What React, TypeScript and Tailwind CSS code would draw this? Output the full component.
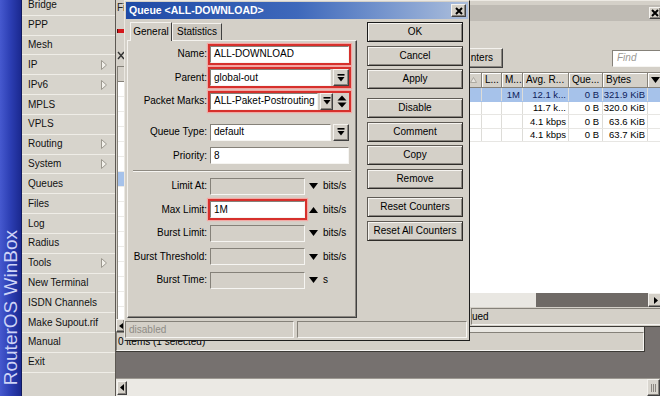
import React from 'react';

const MENU: [string, boolean][] = [
  ['Bridge', false],
  ['PPP', false],
  ['Mesh', false],
  ['IP', true],
  ['IPv6', true],
  ['MPLS', false],
  ['VPLS', false],
  ['Routing', true],
  ['System', true],
  ['Queues', false],
  ['Files', false],
  ['Log', false],
  ['Radius', false],
  ['Tools', true],
  ['New Terminal', false],
  ['ISDN Channels', false],
  ['Make Supout.rif', false],
  ['Manual', false],
  ['Exit', false],
];

const ROWS = [
  { m: '1M', avg: '12.1 k...', q: '0 B', bytes: '321.9 KiB', sel: true },
  { m: '', avg: '11.7 k...', q: '0 B', bytes: '320.0 KiB', sel: false },
  { m: '', avg: '4.1 kbps', q: '0 B', bytes: '63.6 KiB', sel: false },
  { m: '', avg: '4.1 kbps', q: '0 B', bytes: '63.7 KiB', sel: false },
];

const raised =
  'border border-t-[#f4f2ee] border-l-[#f4f2ee] border-r-[#404040] border-b-[#404040] shadow-[inset_-1px_-1px_0_#8a8680]';
const sunken =
  'border border-t-[#858179] border-l-[#858179] border-r-[#f6f5f2] border-b-[#f6f5f2]';

function MenuArrow() {
  return (
    <svg width="6" height="10" viewBox="0 0 6 10">
      <polygon points="0.5,0.5 5.5,5 0.5,9.5" fill="#f2f0ea" stroke="#9c988f" strokeWidth="1" />
    </svg>
  );
}

function ComboGlyph() {
  return (
    <svg width="8" height="8" viewBox="0 0 8 8">
      <rect x="0.5" y="0" width="7" height="1.6" fill="#000" />
      <polygon points="0.5,3 7.5,3 4,7.5" fill="#000" />
    </svg>
  );
}

function UpDownGlyph() {
  return (
    <svg width="10" height="13" viewBox="0 0 10 13">
      <polygon points="5,0.5 9.5,5.5 0.5,5.5" fill="#000" />
      <polygon points="0.5,7.5 9.5,7.5 5,12.5" fill="#000" />
    </svg>
  );
}

function Tri({ up }: { up?: boolean }) {
  return (
    <svg width="9" height="6" viewBox="0 0 9 6">
      {up ? <polygon points="4.5,0 9,6 0,6" fill="#000" /> : <polygon points="0,0 9,0 4.5,6" fill="#000" />}
    </svg>
  );
}

function CloseX() {
  return (
    <svg width="8" height="8" viewBox="0 0 8 8">
      <path d="M1 1 L7 7 M7 1 L1 7" stroke="#000" strokeWidth="2" />
    </svg>
  );
}

function Sidebar() {
  return (
    <div className="w-[22px] h-full flex items-end justify-center bg-linear-to-r from-[#4659cf] via-[#2c3eb3] to-[#1b2990] border-r border-[#111a5e]">
      <span className="[writing-mode:vertical-rl] rotate-180 text-[19px] leading-none text-[#cdd3f7] mb-[11px] whitespace-nowrap">
        RouterOS WinBox
      </span>
    </div>
  );
}

function Menu() {
  return (
    <div className="w-[94px] h-full overflow-hidden bg-[#d7d4cc] border-r border-[#5c5852]">
      <div className="mt-[-4px]">
        {MENU.map(([label, sub]) => (
          <div
            key={label}
            className="h-[19.83px] flex items-center justify-between pl-[6px] pr-[8px] border-b border-[#efede7] text-[#111]"
          >
            <span>{label}</span>
            {sub && <MenuArrow />}
          </div>
        ))}
      </div>
    </div>
  );
}

// window behind everything, only its left strip and bottom edge show
function BackWindow() {
  return (
    <div className="absolute left-0 top-0 w-[529px] h-[352px] flex flex-col bg-[#d4d0c8] border-r border-b border-[#3c3a36]">
      <div className="h-[19px] w-[8px] overflow-hidden pl-[1px] pt-[3px] text-[#222] whitespace-nowrap">Fi</div>
      <div className="h-[47px] flex flex-col pl-[1px]">
        <svg className="mt-[8px]" width="8" height="9" viewBox="0 0 8 9">
          <rect x="0" y="2" width="8" height="4" fill="#d4161a" />
          <rect x="0" y="2" width="1" height="4" fill="#5a0808" />
        </svg>
        <svg className="mt-[15px]" width="8" height="9" viewBox="0 0 8 9">
          <path d="M1 1 L7 8 M7 1 L1 8" stroke="#333" strokeWidth="1.4" />
        </svg>
      </div>
      <div className="flex-1 ml-[1px] bg-white flex flex-col border-t border-l border-[#858179]">
        <div className="h-[15px] bg-[#d4d0c8] border-b border-[#858179]" />
        {Array.from({ length: 15 }).map((_, i) => (
          <div
            key={i}
            className={`h-[15px] border-b border-[#ecebe8] ${i === 6 ? 'bg-[#a6c2ea]' : ''}`}
          />
        ))}
      </div>
      <div className="h-[13px] flex bg-[#e9e7e2]">
        <div className={`w-[9px] h-full flex items-center justify-center bg-[#d4d0c8] ${raised}`}>
          <svg width="4" height="6" viewBox="0 0 4 6">
            <polygon points="4,0 4,6 0,3" fill="#000" />
          </svg>
        </div>
      </div>
      <div className={`h-[19px] flex items-center pl-[1px] ${sunken}`}>0 items (1 selected)</div>
    </div>
  );
}

function QueueList() {
  return (
    <div className="absolute left-[14px] top-0 w-[534px] h-[327px] flex flex-col bg-[#d4d0c8] border border-t-[#ece9e3] border-l-[#ece9e3] border-r-[#3c3a36] border-b-[#3c3a36] pt-[4px] pb-[1px]">
      <div className="h-[16px] flex items-center justify-end bg-[#bfbbb4] pr-[2px]">
        <div className={`w-[12px] h-[12px] flex items-center justify-center bg-[#d4d0c8] ${raised}`}>
          <CloseX />
        </div>
      </div>
      <div className="h-[26px]" />
      <div className="h-[22px] flex items-center">
        <div className={`ml-[338px] w-[34px] h-[20px] flex items-center justify-end pr-[9px] bg-[#d4d0c8] ${raised}`}>
          nters
        </div>
        <div className={`ml-auto w-[51px] h-[17px] flex items-center pl-[4px] bg-white italic text-[#9a9893] ${sunken}`}>
          Find
        </div>
      </div>
      <div className="mt-[3px] flex-1 flex flex-col bg-white border-t border-l border-[#858179]">
        <div className="h-[15px] flex bg-[#d4d0c8] border-b border-[#858179]">
          <div className="flex-1 flex items-center justify-end pr-[4px] border-r border-[#858179] shadow-[inset_1px_1px_0_#fff]">
            <svg width="7" height="6" viewBox="0 0 7 6">
              <polygon points="3.5,0.5 6.5,5.5 0.5,5.5" fill="#e8e6e0" stroke="#a29e96" strokeWidth="0.8" />
            </svg>
          </div>
          <div className="w-[20px] pl-[3px] flex items-center border-r border-[#858179] shadow-[inset_1px_1px_0_#fff]">L...</div>
          <div className="w-[21px] pl-[3px] flex items-center border-r border-[#858179] shadow-[inset_1px_1px_0_#fff]">M...</div>
          <div className="w-[46px] pl-[3px] flex items-center border-r border-[#858179] shadow-[inset_1px_1px_0_#fff] whitespace-nowrap overflow-hidden">Avg. R...</div>
          <div className="w-[34px] pl-[3px] flex items-center border-r border-[#858179] shadow-[inset_1px_1px_0_#fff]">Que...</div>
          <div className="w-[45px] pl-[3px] flex items-center border-r border-[#858179] shadow-[inset_1px_1px_0_#fff]">Bytes</div>
          <div className="w-[15px] pl-[3px] flex items-center shadow-[inset_1px_1px_0_#fff]">
            <Tri />
          </div>
        </div>
        {ROWS.map((r, i) => (
          <div
            key={i}
            className={`h-[13.5px] flex leading-none text-[9.5px] border-b ${r.sel ? 'bg-[#a6c2ea] text-[#0e1d5a] border-[#a6c2ea]' : 'border-[#e7e6e3]'}`}
          >
            <div className="flex-1 border-r border-[#dddcd8]" />
            <div className="w-[20px] border-r border-[#dddcd8]" />
            <div className="w-[21px] flex items-center justify-end pr-[2px] border-r border-[#dddcd8]">{r.m}</div>
            <div className="w-[46px] flex items-center justify-end pr-[2px] border-r border-[#dddcd8] whitespace-nowrap">{r.avg}</div>
            <div className="w-[34px] flex items-center justify-end pr-[3px] border-r border-[#dddcd8]">{r.q}</div>
            <div className="w-[45px] flex items-center justify-end pr-[2px] border-r border-[#dddcd8] whitespace-nowrap">{r.bytes}</div>
            <div className="w-[15px]" />
          </div>
        ))}
      </div>
      <div className="h-[14px] flex bg-[#e9e7e2]">
        <div className="flex-1" />
        <div className="w-[112px] bg-[#6f6a66]" />
        <div className={`w-[15px] flex items-center justify-center bg-[#d4d0c8] ${raised}`}>
          <svg width="4" height="7" viewBox="0 0 4 7">
            <polygon points="0,0 4,3.5 0,7" fill="#000" />
          </svg>
        </div>
      </div>
      <div className="mt-[1px] h-[17px] flex gap-[2px]">
        <div className={`w-[338px] ${sunken}`} />
        <div className={`flex-1 flex items-center ${sunken}`}>ued</div>
      </div>
    </div>
  );
}

function Row({ label, children }: { label: string; children: React.ReactNode }) {
  return (
    <div className="h-[23.5px] flex items-center">
      <div className="w-[80px] pr-[1px] text-right whitespace-nowrap">{label}</div>
      {children}
    </div>
  );
}

function Box({ red, w, children }: { red?: boolean; w: string; children: React.ReactNode }) {
  return (
    <div
      className={`${w} flex items-center border-2 ${red ? 'border-[#d6302c] shadow-[0_0_1px_1px_#f3a7a3]' : 'border-transparent'}`}
    >
      {children}
    </div>
  );
}

function Input({ value, w, disabled }: { value?: string; w: string; disabled?: boolean }) {
  return (
    <div
      className={`${w} h-[17px] flex items-center pl-[3px] whitespace-nowrap overflow-hidden ${disabled ? 'bg-[#d4d0c8]' : 'bg-white'} ${sunken}`}
    >
      {value}
    </div>
  );
}

function ComboBtn({ w }: { w: string }) {
  return (
    <div className={`${w} h-[17px] ml-[2px] flex items-center justify-center bg-[#d4d0c8] ${raised}`}>
      <ComboGlyph />
    </div>
  );
}

function RateRow({ label, value, red, up, unit }: { label: string; value?: string; red?: boolean; up?: boolean; unit: string }) {
  return (
    <Row label={label}>
      <Box red={red} w="w-[99px]">
        <Input w="w-full" value={value} disabled={!red} />
      </Box>
      <div className="ml-[2px] w-[9px] flex items-center">
        <Tri up={up} />
      </div>
      <span className="ml-[5px]">{unit}</span>
    </Row>
  );
}

function Btn({ label, def, className }: { label: string; def?: boolean; className?: string }) {
  return (
    <div
      className={`h-[20px] flex items-center justify-center bg-[#d4d0c8] border shadow-[inset_1px_1px_0_#f6f4f0,inset_-1px_-1px_0_#8a8680] ${def ? 'border-[#1a1a1a]' : 'border-[#5e5a54] border-b-[#2e2c29] border-r-[#2e2c29]'} ${className ?? ''}`}
    >
      {label}
    </div>
  );
}

function QueueDialog() {
  return (
    <div className="absolute left-[8px] top-0 w-[346px] h-[341px] flex flex-col bg-[#d4d0c8] border border-t-[#ebe8e2] border-l-[#ebe8e2] border-r-[#1e1e1e] border-b-[#1e1e1e]">
      <div className="mx-[1px] mt-[1px] h-[17px] flex items-center justify-between bg-linear-to-r from-[#1f4aa6] via-[#3e68bb] to-[#adbfdc] pl-[3px] pr-[2px]">
        <span className="text-[10.5px] font-bold text-white whitespace-nowrap">{'Queue <ALL-DOWNLOAD>'}</span>
        <div className={`w-[15px] h-[13px] flex items-center justify-center bg-[#d4d0c8] ${raised}`}>
          <CloseX />
        </div>
      </div>

      <div className="h-[299px] flex">
        <div className="ml-[2px] w-[230px] flex flex-col">
          <div className="h-[21px] flex items-end pl-[3px]">
            <div className="w-[42px] h-[19px] flex items-center justify-center bg-[#d4d0c8] border border-b-0 border-t-[#f4f2ee] border-l-[#f4f2ee] border-r-[#404040] relative top-px">
              General
            </div>
            <div className="w-[50px] h-[17px] flex items-center justify-center bg-[#cbc7bf] border border-b-0 border-t-[#f4f2ee] border-l-[#f4f2ee] border-r-[#404040]">
              Statistics
            </div>
          </div>
          <div className={`h-[278px] pt-[1.25px] ${raised}`}>
            <Row label="Name:">
              <Box red w="w-[143px]">
                <Input w="w-full" value="ALL-DOWNLOAD" />
              </Box>
            </Row>
            <Row label="Parent:">
              <Box red w="w-[143px]">
                <Input w="flex-1" value="global-out" />
                <ComboBtn w="w-[16px]" />
              </Box>
            </Row>
            <Row label="Packet Marks:">
              <Box red w="w-[143px]">
                <Input w="w-[108px]" value="ALL-Paket-Postrouting" />
                <ComboBtn w="w-[13px]" />
                <div className="ml-[2px] w-[14px] flex items-center justify-center">
                  <UpDownGlyph />
                </div>
              </Box>
            </Row>
            <div className="h-[7.5px]" />
            <Row label="Queue Type:">
              <Box w="w-[143px]">
                <Input w="flex-1" value="default" />
                <ComboBtn w="w-[16px]" />
              </Box>
            </Row>
            <Row label="Priority:">
              <Box w="w-[143px]">
                <Input w="w-full" value="8" />
              </Box>
            </Row>
            <div className="h-[7px] flex items-center pl-[5px]">
              <div className="w-[218px] border-t border-b border-t-[#8e8a82] border-b-[#f6f5f2]" />
            </div>
            <RateRow label="Limit At:" unit="bits/s" />
            <RateRow label="Max Limit:" value="1M" red up unit="bits/s" />
            <RateRow label="Burst Limit:" unit="bits/s" />
            <RateRow label="Burst Threshold:" unit="bits/s" />
            <RateRow label="Burst Time:" unit="s" />
          </div>
        </div>

        <div className="ml-[10px] w-[96px] pt-[3px] flex flex-col">
          <Btn label="OK" def />
          <Btn label="Cancel" className="mt-[3.5px]" />
          <Btn label="Apply" className="mt-[3.5px]" />
          <Btn label="Disable" className="mt-[9px]" />
          <Btn label="Comment" className="mt-[3.5px]" />
          <Btn label="Copy" className="mt-[3.5px]" />
          <Btn label="Remove" className="mt-[3.5px]" />
          <Btn label="Reset Counters" className="mt-[8.5px]" />
          <Btn label="Reset All Counters" className="mt-[3.5px]" />
        </div>
      </div>

      <div className="mt-[3px] h-[17px] flex gap-[3px] pr-[2px]">
        <div className={`w-[169px] flex items-center pl-[3px] text-[#8f8c86] ${sunken}`}>disabled</div>
        <div className={`flex-1 ${sunken}`} />
      </div>
    </div>
  );
}

function Desktop() {
  return (
    <div className="flex-1 h-full flex flex-col">
      <div className="relative flex-1 bg-[#76716f] overflow-hidden">
        <BackWindow />
        <QueueList />
        <QueueDialog />
      </div>
      <div className="h-[18px] flex items-center bg-[#ebe9e4] border-t border-[#9d9992]">
        <div className={`ml-[1px] w-[10px] h-[14px] flex items-center justify-center bg-[#d4d0c8] ${raised}`}>
          <svg width="4" height="7" viewBox="0 0 4 7">
            <polygon points="4,0 4,7 0,3.5" fill="#000" />
          </svg>
        </div>
        <div className={`ml-auto w-[13px] h-full flex items-center justify-center gap-[1px] bg-[#d9d6cf] ${raised}`}>
          <div className="w-px h-[8px] bg-[#8a8680]" />
          <div className="w-px h-[8px] bg-[#8a8680]" />
          <div className="w-px h-[8px] bg-[#8a8680]" />
        </div>
      </div>
    </div>
  );
}

export default function App() {
  return (
    <div className="flex w-[660px] h-[396px] overflow-hidden bg-[#d4d0c8] text-[10px] leading-none text-black font-['Liberation_Sans',Arial,sans-serif]">
      <Sidebar />
      <Menu />
      <Desktop />
    </div>
  );
}
